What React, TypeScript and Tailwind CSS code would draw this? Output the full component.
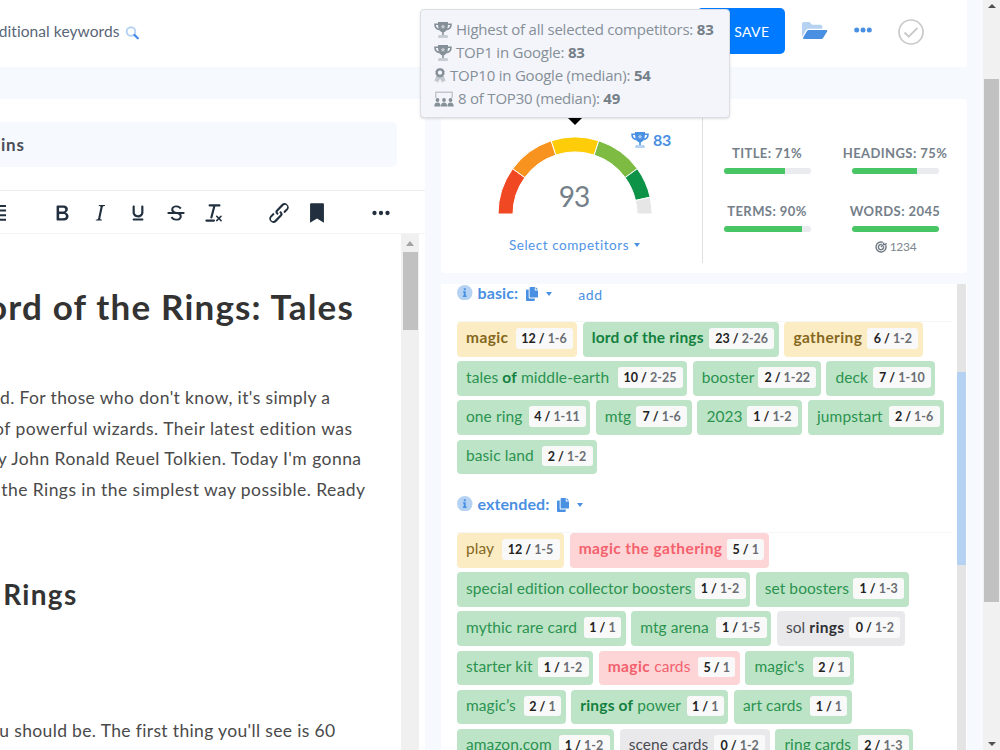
import type { ReactNode } from 'react';

const toolbarPaths = {
  bold: 'M7.8 19c-.3 0-.5 0-.6-.2l-.2-.5V5.7c0-.2 0-.4.2-.5l.6-.2h5c1.5 0 2.7.3 3.5 1 .7.6 1.1 1.4 1.1 2.5a3 3 0 01-.6 1.9c-.4.6-1 1-1.6 1.2.4.1.9.3 1.3.6s.8.7 1 1.2c.4.4.5 1 .5 1.6 0 1.3-.4 2.3-1.3 3-.8.7-2.1 1-3.8 1H7.8zm5-8.3c.6 0 1.2-.1 1.6-.5.4-.3.6-.7.6-1.3 0-1.1-.8-1.7-2.3-1.7H9.3v3.5h3.4zm.5 6c.7 0 1.3-.1 1.7-.4.4-.4.6-.9.6-1.5s-.2-1-.7-1.4c-.4-.3-1-.4-2-.4H9.4v3.8h4z',
  italic: 'M16.7 4.7l-.1.9h-.3c-.6 0-1 0-1.4.3-.3.3-.4.6-.5 1.1l-2.1 9.8v.6c0 .5.4.8 1.4.8h.2l-.2.8H8l.2-.8h.2c1.1 0 1.8-.5 2-1.5l2-9.8.1-.5c0-.6-.4-.8-1.4-.8h-.3l.2-.9h5.8z',
  underline: 'M16 5c.6 0 1 .4 1 1v5.5a4 4 0 01-.4 1.8l-1 1.4a5.3 5.3 0 01-5.5 1 5 5 0 01-1.6-1c-.5-.4-.8-.9-1.1-1.4a4 4 0 01-.4-1.8V6c0-.6.4-1 1-1s1 .4 1 1v5.5c0 .3 0 .6.2 1l.6.7a3.3 3.3 0 002.2.8 3.4 3.4 0 002.2-.8c.3-.2.4-.5.6-.8l.2-.9V6c0-.6.4-1 1-1zM8 17h8c.6 0 1 .4 1 1s-.4 1-1 1H8a1 1 0 010-2z',
  strike: 'M15.6 8.5c-.5-.7-1-1.1-1.3-1.3-.6-.4-1.3-.6-2-.6-2.7 0-2.8 1.7-2.8 2.1 0 1.6 1.8 2 3.2 2.3 4.4.9 4.6 2.8 4.6 3.9 0 1.4-.7 4.1-5 4.1A6.2 6.2 0 017 16.4l1.5-1.1c.4.6 1.6 2 3.7 2 1.6 0 2.5-.4 3-1.2.4-.8.3-2-.8-2.6-.7-.4-1.6-.7-2.9-1-1-.2-3.9-.8-3.9-3.6C7.6 6 10.3 5 12.4 5c2.900 0 4.200 1.600 4.700 2.400l-1.500 1.100zM5 11h14a1 1 0 010 2H5a1 1 0 010-2z',
  clear: 'M13.2 6a1 1 0 010 .2l-2.6 10a1 1 0 01-1 .8h-.2a.8.8 0 01-.8-1l2.6-10H8a1 1 0 110-2h9a1 1 0 010 2h-3.8zM5 18h7a1 1 0 010 2H5a1 1 0 010-2zm13 1.5L16.5 18 15 19.5a.7.7 0 01-1-1l1.5-1.5-1.5-1.5a.7.7 0 011-1l1.5 1.5 1.5-1.5a.7.7 0 011 1L17.5 17l1.5 1.5a.7.7 0 01-1 1z',
  link: 'M6.2 12.3a1 1 0 011.4 1.4l-2.1 2a2 2 0 102.7 2.8l4.8-4.8a1 1 0 000-1.4 1 1 0 111.4-1.3 2.9 2.9 0 010 4L9.6 20a3.9 3.9 0 01-5.5-5.5l2-2zm11.6-.6a1 1 0 01-1.4-1.4l2-2a2 2 0 10-2.6-2.8L11 10.3a1 1 0 000 1.4A1 1 0 119.6 13a2.9 2.9 0 010-4L14.4 4a3.9 3.9 0 015.5 5.5l-2 2z',
  bookmark: 'M5.6 4v17l6.4-4 6.4 4V4c0-.6-.4-1-1-1H6.6a1 1 0 00-1 1z',
  more: 'M6 10a2 2 0 110 4 2 2 0 010-4zm6 0a2 2 0 110 4 2 2 0 010-4zm6 0a2 2 0 110 4 2 2 0 010-4z',
};

function Tool({ name }: { name: keyof typeof toolbarPaths }) {
  return (
    <button className="w-[38px] flex justify-center">
      <svg viewBox="0 0 24 24" className="size-[26px] fill-[#222f3e]"><path d={toolbarPaths[name]} /></svg>
    </button>
  );
}

function Trophy({ className }: { className: string }) {
  return (
    <svg viewBox="0 0 18 16" className={className} fill="currentColor">
      <path d="M4 0h10v2c0 4.500-1.700 7.500-4.200 8.300V13H8.200v-2.700C5.700 9.500 4 6.500 4 2z" />
      <path d="M4.300 2.200H1c0 3 1.700 5 4.700 5.400M13.700 2.200H17c0 3-1.700 5-4.700 5.400" fill="none" stroke="currentColor" strokeWidth="1.600" />
      <path d="M9 2.200l.8 1.500 1.600.2-1.200 1.200.3 1.700L9 6l-1.500.8.3-1.700-1.200-1.200 1.600-.2z" fill="#fff" opacity=".55" />
      <path d="M5.500 13h7c.8 0 1.300.5 1.300 1.300V16H4.200v-1.700c0-.8.5-1.300 1.300-1.300z" opacity=".4" />
    </svg>
  );
}

function Ribbon() {
  return (
    <svg viewBox="0 0 12 16" className="w-3 h-[15px]" fill="currentColor">
      <path d="M2 8.500h8l2 5.700-2-.3L8.700 16 6 11.500 3.300 16 2 13.900l-2 .3z" opacity=".45" />
      <path fillRule="evenodd" d="M6 0l1.500.6 1.600.1.7 1.500 1.100 1.100-.2 1.700.2 1.600-1.100 1.200-.7 1.500-1.600.1-1.500.6-1.500-.6-1.600-.1-.7-1.500-1.100-1.200.2-1.600-.2-1.700 1.100-1.100.7-1.500L4.500.6zM6 2.700a2.300 2.300 0 100 4.600 2.300 2.300 0 000-4.600z" />
    </svg>
  );
}

function Audience() {
  return (
    <svg viewBox="0 0 20 16" className="w-5 h-4" fill="currentColor">
      <path d="M1 7V1.500C1 .9 1.400.5 2 .5h16c.6 0 1 .4 1 1V7h-1.500V2h-15v5z" opacity=".45" />
      <circle cx="3.500" cy="9" r="1.900" /><circle cx="10" cy="9" r="1.900" /><circle cx="16.500" cy="9" r="1.900" />
      <path d="M.3 15.500c0-2.800 1-4 3.200-4s3.100 1.200 3.100 4zm6.600 0c0-2.800 1-4 3.100-4s3.100 1.200 3.100 4zm6.500 0c0-2.800 1-4 3.100-4s3.200 1.200 3.200 4z" />
    </svg>
  );
}

function Tooltip() {
  const rows = [
    { icon: <Trophy className="w-[18px] h-4" />, label: 'Highest of all selected competitors:', value: 83, gap: 'gap-[4px]' },
    { icon: <Trophy className="w-[18px] h-4" />, label: 'TOP1 in Google:', value: 83, gap: 'gap-[4px]' },
    { icon: <Ribbon />, label: 'TOP10 in Google (median):', value: 54, gap: 'gap-[4px]' },
    { icon: <Audience />, label: '8 of TOP30 (median):', value: 49, gap: 'gap-[4px]' },
  ];
  return (
    <div className="absolute left-[420px] top-[9px] w-[310px] h-[109px] rounded-[4px] border border-[#dcdee2] bg-[#f4f5fa] pl-[13px] pt-[8px] font-['Open_Sans',sans-serif] text-[15px] tracking-[-0.220px] text-[#858f98] shadow-sm">
      {rows.map((r) => (
        <div key={r.label} className={`flex items-center h-[23px] whitespace-nowrap ${r.gap}`}>
          {r.icon}
          <span>{r.label} <b className="text-[#747f88]">{r.value}</b></span>
        </div>
      ))}
      <span className="absolute left-[147px] top-[108px] border-x-[7px] border-t-[7px] border-x-transparent border-t-black" />
    </div>
  );
}

function Header() {
  return (
    <header className="w-[967px] h-[67px] shrink-0 bg-white rounded-br-[4px] flex items-start">
      <div className="w-[119.500px] mt-[21px] flex justify-end overflow-hidden text-[15.500px] leading-5 tracking-[0.080px] text-[#5a6577] whitespace-nowrap">
        ditional keywords
      </div>
      <svg viewBox="0 0 14 14" className="size-[14px] mt-[26px] ml-[5px]">
        <circle cx="6" cy="5.500" r="4.300" fill="none" stroke="#b5d2f3" strokeWidth="1.900" />
        <path d="M9.500 9l3.300 3.300" stroke="#3f8ae8" strokeWidth="2.200" strokeLinecap="round" />
      </svg>
      <button className="ml-[558px] mt-2 w-[88px] h-[46px] rounded-[5px] bg-[#007bff] text-white text-[14px] leading-[45px] tracking-[0.400px] text-right pr-[15px]">SAVE</button>
      <svg viewBox="0 0 26 18" className="w-[26px] h-[18px] mt-[21.500px] ml-[17px]">
        <path d="M0 15V2C0 .8.8 0 2 0h5.500L10 2.700h8.500c1 0 1.800.8 1.800 1.800v2.200H6.500c-1 0-1.900.5-2.400 1.400z" fill="#b5d2f3" />
        <path d="M5 8.900c.3-.6.9-.9 1.500-.9h17.800c.8 0 1.200.7.8 1.400l-4 6.700c-.3.5-.8.8-1.400.8H2c-.8 0-1.200-.6-.8-1.300z" fill="#4a90e2" />
      </svg>
      <svg viewBox="0 0 18 6" className="w-[18px] h-[6px] mt-[27px] ml-[26px]" fill="#4a90e2">
        <circle cx="2.700" cy="3" r="2.500" /><circle cx="9" cy="3" r="2.500" /><circle cx="15.300" cy="3" r="2.500" />
      </svg>
      <svg viewBox="0 0 26 26" className="size-[26px] mt-[19px] ml-[26.500px]" fill="none" stroke="#c9c9c9">
        <circle cx="13" cy="13" r="12" strokeWidth="1.700" />
        <path d="M6.500 13.500l4.200 4.200L19.500 8.800" strokeWidth="1.900" />
      </svg>
    </header>
  );
}

const intro = [
  { text: "d. For those who don't know, it's simply a", style: 'w-[330.400px] tracking-[0.380px]' },
  { text: 'of powerful wizards. Their latest edition was', style: 'w-[352.500px] tracking-[0.480px]' },
  { text: "y John Ronald Reuel Tolkien. Today I'm gonna", style: 'w-[361.500px] tracking-[0.450px]' },
  { text: 'the Rings in the simplest way possible. Ready', style: 'w-[365.500px] tracking-[0.440px]' },
];

function Editor() {
  return (
    <section className="w-[425px] bg-white flex flex-col shrink-0">
      <div className="mt-[23px] w-[397px] h-[45px] shrink-0 rounded-r-[5px] bg-[#f6faff] leading-[45px] pl-px text-[17px] font-bold tracking-[0.750px] text-[#4a4f57]">ins</div>
      <div className="mt-[23px] h-[44px] shrink-0 border-y border-[#ebedef] border-b-[#f4f4f4] flex items-center pt-px">
        <div className="w-[43px]">
          <svg viewBox="0 0 6 16" className="w-[6px] h-4 fill-[#222f3e]"><path d="M0 0h6v2H0zM0 4.600h6v2H0zM0 9.200h6v2H0zM0 13.800h6v2H0z" /></svg>
        </div>
        <Tool name="bold" />
        <Tool name="italic" />
        <Tool name="underline" />
        <Tool name="strike" />
        <Tool name="clear" />
        <div className="ml-[26.500px] flex">
          <Tool name="link" />
          <Tool name="bookmark" />
        </div>
        <div className="ml-[26px] flex"><Tool name="more" /></div>
      </div>
      <div className="flex flex-1 min-h-0">
        <div className="w-[401px] overflow-hidden whitespace-nowrap text-[17.500px] leading-[30.670px] text-[#4a4a4a]">
          <h1 className="mt-[48px] w-[354px] flex justify-end overflow-hidden text-[35px] leading-[48px] font-bold tracking-[1.180px] text-[#333]">ord of the Rings: Tales</h1>
          <div className="mt-[53px]">
            {intro.map((l) => (
              <p key={l.text} className={`flex justify-end overflow-hidden ${l.style}`}>{l.text}</p>
            ))}
          </div>
          <h2 className="mt-[68px] w-[77.500px] flex justify-end text-[28px] leading-[40px] font-bold tracking-[1.300px] text-[#333]">Rings</h2>
          <p className="mt-[102px] w-[335.500px] flex justify-end tracking-[0.350px]">u should be. The first thing you'll see is 60</p>
        </div>
        {/* Editor scrollbar */}
        <div className="w-[18px] bg-[#f0f0f0] flex flex-col items-center">
          <span className="mt-[7px] border-x-[4px] border-b-[5px] border-x-transparent border-b-[#a3a3a3]" />
          <div className="mt-[6px] w-[15px] h-[78px] bg-[#c1c1c1]" />
        </div>
      </div>
    </section>
  );
}

// Arc slices of the score gauge, in degrees counted from the right end
const slices = [
  { from: 180, to: 144, color: '#f04823' },
  { from: 144, to: 108, color: '#f7931e' },
  { from: 108, to: 72, color: '#ffcc0a' },
  { from: 72, to: 36, color: '#7dbb42' },
  { from: 36, to: 12.6, color: '#0d9347' },
  { from: 12.6, to: 0, color: '#e6e6e6' },
];

function point(r: number, deg: number) {
  const a = (deg * Math.PI) / 180;
  return `${77 + r * Math.cos(a)} ${77 - r * Math.sin(a)}`;
}

function Gauge() {
  return (
    <svg viewBox="0 0 154 77" className="w-[154px] h-[77px]">
      {slices.map((s) => (
        <path
          key={s.from}
          d={`M${point(77, s.from)}A77 77 0 0 1 ${point(77, s.to)}L${point(62, s.to)}A62 62 0 0 0 ${point(62, s.from)}Z`}
          fill={s.color}
          stroke="#fff"
          strokeWidth="1"
        />
      ))}
    </svg>
  );
}

function Meter({ label, value, children }: { label: string; value: number; children?: ReactNode }) {
  return (
    <div className="w-32 h-[58px] flex flex-col items-center">
      <div className="text-[13px] leading-4 font-bold tracking-[0.420px] text-[#75808a] whitespace-nowrap">{label}</div>
      <div className="mt-[7px] w-[87px] h-[6px] shrink-0 rounded-full bg-[#e9ebee] overflow-hidden">
        <div className="h-full bg-[#48c564]" style={{ width: `${value}%` }} />
      </div>
      {children}
    </div>
  );
}

function ScoreCard() {
  return (
    <div className="h-[174px] shrink-0 bg-white rounded-[4px] flex">
      <div className="relative w-[261px] h-[164px] border-r border-[#dedfe1] box-content flex flex-col items-center">
        <div className="mt-[38px] pl-[6px]"><Gauge /></div>
        <div className="-mt-[37px] h-[38px] pl-[5px] leading-[38px] text-[28px] tracking-[-1px] text-[#747f89]">93</div>
        <div className="mt-[21px] flex items-center pl-[6px] text-[13.500px] leading-[18px] tracking-[0.540px] text-[#4f94e6]">
          Select competitors
          <span className="ml-[5px] border-x-[3.500px] border-t-[4px] border-x-transparent border-t-[#4a90e2]" />
        </div>
        <div className="absolute left-[190px] top-[31px] flex items-center gap-1 text-[16px] leading-5 font-bold text-[#4a90e2] tracking-[-0.200px]">
          <Trophy className="w-[18px] h-4" />83
        </div>
      </div>
      <div className="mt-[46px] h-[116px] flex flex-wrap w-[256px]">
        <Meter label="TITLE: 71%" value={71} />
        <Meter label="HEADINGS: 75%" value={75} />
        <Meter label="TERMS: 90%" value={90} />
        <Meter label="WORDS: 2045" value={100}>
          <div className="mt-[7px] pl-px flex items-center gap-[3px] text-[12px] leading-4 tracking-[-0.300px] text-[#7d8790]">
            <svg viewBox="0 0 12 12" className="size-3" fill="none" stroke="#6f7a84" strokeWidth="1.400">
              <path d="M7.800 1.300A5 5 0 1010.700 4.200" />
              <path d="M6.800 3.600A2.600 2.600 0 108.500 5.300M6 6l3-3M8.500 1.500v2h2l1-1.200" />
            </svg>
            1234
          </div>
        </Meter>
      </div>
    </div>
  );
}

type Tone = 'green' | 'yellow' | 'red' | 'gray';
type Chip = { text: ReactNode; used: number; range: string; tone: Tone; w: string; bw: string };

const tones: Record<Tone, string> = {
  green: 'bg-[#bde4c7] text-[#2b9350]',
  yellow: 'bg-[#fbecc4] text-[#85681d]',
  red: 'bg-[#fdd5d6] text-[#f3616d]',
  gray: 'bg-[#e9e9ec] text-[#4b4b52]',
};

const B = ({ children }: { children: ReactNode }) => <b className="tracking-[0.400px]">{children}</b>;
const DarkB = ({ children }: { children: ReactNode }) => <b className="tracking-[0.200px] text-[#14803f]">{children}</b>;

const basic: Chip[] = [
  { text: <B>magic</B>, used: 12, range: '1-6', tone: 'yellow', w: 'w-[120px]', bw: 'w-[57px]' },
  { text: <DarkB>lord of the rings</DarkB>, used: 23, range: '2-26', tone: 'green', w: 'w-[196px]', bw: 'w-[65px]' },
  { text: <B>gathering</B>, used: 6, range: '1-2', tone: 'yellow', w: 'w-[138.500px]', bw: 'w-[51px]' },
  { text: <>tales <DarkB>of</DarkB> middle-earth</>, used: 10, range: '2-25', tone: 'green', w: 'w-[230px]', bw: 'w-[65px]' },
  { text: 'booster', used: 2, range: '1-22', tone: 'green', w: 'w-[128px]', bw: 'w-[58px]' },
  { text: 'deck', used: 7, range: '1-10', tone: 'green', w: 'w-[109px]', bw: 'w-[58px]' },
  { text: 'one ring', used: 4, range: '1-11', tone: 'green', w: 'w-[133px]', bw: 'w-[57px]' },
  { text: 'mtg', used: 7, range: '1-6', tone: 'green', w: 'w-[96px]', bw: 'w-[51px]' },
  { text: '2023', used: 1, range: '1-2', tone: 'green', w: 'w-[105px]', bw: 'w-[51px]' },
  { text: 'jumpstart', used: 2, range: '1-6', tone: 'green', w: 'w-[136px]', bw: 'w-[51px]' },
  { text: 'basic land', used: 2, range: '1-2', tone: 'green', w: 'w-[140px]', bw: 'w-[51px]' },
];

const extended: Chip[] = [
  { text: 'play', used: 12, range: '1-5', tone: 'yellow', w: 'w-[107px]', bw: 'w-[58px]' },
  { text: <B>magic the gathering</B>, used: 5, range: '1', tone: 'red', w: 'w-[199px]', bw: 'w-[37px]' },
  { text: 'special edition collector boosters', used: 1, range: '1-2', tone: 'green', w: 'w-[293px]', bw: 'w-[51px]' },
  { text: 'set boosters', used: 1, range: '1-3', tone: 'green', w: 'w-[153px]', bw: 'w-[51px]' },
  { text: 'mythic rare card', used: 1, range: '1', tone: 'green', w: 'w-[168.500px]', bw: 'w-[37px]' },
  { text: 'mtg arena', used: 1, range: '1-5', tone: 'green', w: 'w-[140px]', bw: 'w-[51px]' },
  { text: <>sol <b className="tracking-[0.300px] text-[#2f2f35]">rings</b></>, used: 0, range: '1-2', tone: 'gray', w: 'w-[128px]', bw: 'w-[51px]' },
  { text: 'starter kit', used: 1, range: '1-2', tone: 'green', w: 'w-[136px]', bw: 'w-[51px]' },
  { text: <><B>magic</B> cards</>, used: 5, range: '1', tone: 'red', w: 'w-[141px]', bw: 'w-[37px]' },
  { text: "magic's", used: 2, range: '1', tone: 'green', w: 'w-[109px]', bw: 'w-[37px]' },
  { text: 'magic’s', used: 2, range: '1', tone: 'green', w: 'w-[108.500px]', bw: 'w-[37px]' },
  { text: <><DarkB>rings of</DarkB> power</>, used: 1, range: '1', tone: 'green', w: 'w-[157px]', bw: 'w-[37px]' },
  { text: 'art cards', used: 1, range: '1', tone: 'green', w: 'w-[118px]', bw: 'w-[37px]' },
  { text: 'amazon.com', used: 1, range: '1-2', tone: 'green', w: 'w-[157px]', bw: 'w-[51px]' },
  { text: 'scene cards', used: 0, range: '1-2', tone: 'gray', w: 'w-[150px]', bw: 'w-[51px]' },
  { text: 'ring cards', used: 2, range: '1-3', tone: 'green', w: 'w-[138px]', bw: 'w-[51px]' },
];

function Chips({ items }: { items: Chip[] }) {
  return (
    <div className="w-[495px] flex flex-wrap gap-x-[5.700px] gap-y-[4.700px] border-t border-[#f6f6f7]">
      {items.map((c, i) => (
        <div key={i} className={`h-[34.500px] rounded-[4px] flex justify-between pl-[9px] pr-[4.500px] whitespace-nowrap ${tones[c.tone]} ${c.w}`}>
          <span className="mt-[5.400px] text-[15.500px] leading-5 tracking-[0.080px]">{c.text}</span>
          <span className={`mt-[6px] h-[20.500px] rounded-[3px] bg-[#f9f9f9] text-center text-[12.500px] leading-[21px] font-bold text-[#6b6e73] ${c.bw}`}>
            <span className="text-[#222]">{c.used} /</span> {c.range}
          </span>
        </div>
      ))}
    </div>
  );
}

function GroupTitle({ title, children }: { title: string; children?: ReactNode }) {
  return (
    <div className="flex items-center h-5 text-[#4a90e2]">
      <svg viewBox="0 0 16 16" className="size-[15.500px] -mt-px">
        <circle cx="8" cy="8" r="8" fill="#b5d2f3" />
        <path d="M7 3.300h2v2H7zM6.300 6.500H9v4.300h.9v1.500H6.100v-1.500H7V8h-.7z" fill="#4a90e2" />
      </svg>
      <span className="ml-[5px] text-[16px] leading-5 font-bold tracking-[0.100px]">{title}</span>
      <svg viewBox="0 0 13 14" className="w-[13px] h-[14px] ml-2 mt-[2px]" fill="currentColor">
        <path d="M4.500 0h4.300v3.500H12v6.200c0 .5-.4.900-.9.900H4.500c-.5 0-.9-.4-.9-.9V.9c0-.5.4-.9.900-.9zM9.600 0L12 2.600H9.600zM.900 2.600h1.800v8c0 .5.400.9.900.9h5.200v1.500c0 .5-.4.900-.9.900H.9c-.5 0-.9-.4-.9-.9V3.500c0-.5.400-.9.900-.9z" />
      </svg>
      <span className="ml-[7px] mt-[2px] border-x-[3.500px] border-t-[4px] border-x-transparent border-t-[#4a90e2]" />
      {children}
    </div>
  );
}

function Keywords() {
  return (
    <div className="flex-1 min-h-0 bg-white flex justify-between">
      <div className="pl-4 overflow-hidden">
        <div className="h-[37px] -mt-px mb-px">
          <GroupTitle title="basic:">
            <span className="ml-[26px] mt-[2px] text-[14px] tracking-[0.600px]">add</span>
          </GroupTitle>
        </div>
        <Chips items={basic} />
        <div className="mt-[20px] h-[38px]"><GroupTitle title="extended:" /></div>
        <Chips items={extended} />
      </div>
      <div className="w-[9px] mr-px bg-[#e4e4e4]"><div className="mt-[87.500px] h-[193px] bg-[#b5d2f3]" /></div>
    </div>
  );
}

export default function App() {
  return (
    <div className="relative w-[1000px] h-[750px] overflow-hidden bg-[#f6faff] flex font-['Lato',sans-serif]">
      <div className="w-[983px] flex flex-col">
        <Header />
        <div className="mt-8 flex flex-1 min-h-0">
          <Editor />
          <main className="ml-4 w-[526px] flex flex-col gap-[11px]">
            <ScoreCard />
            <Keywords />
          </main>
        </div>
      </div>
      {/* Page scrollbar */}
      <div className="w-[17px] bg-[#f1f1f1] flex flex-col items-center">
        <span className="mt-[4px] border-x-[4px] border-b-[4px] border-x-transparent border-b-[#505050]" />
        <div className="mt-[70.500px] w-[15px] h-[523px] bg-[#c1c1c1]" />
        <span className="mt-auto mb-[4px] border-x-[4px] border-t-[4px] border-x-transparent border-t-[#505050]" />
      </div>
      <Tooltip />
    </div>
  );
}
